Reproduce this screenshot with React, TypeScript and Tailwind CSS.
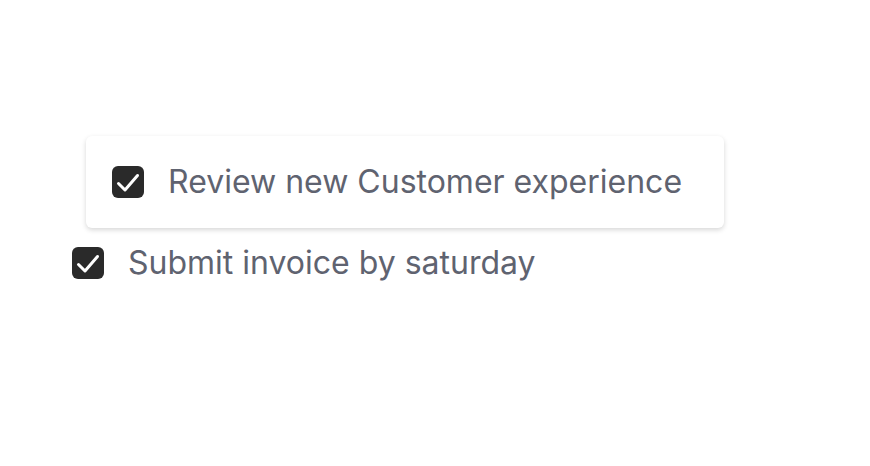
import React from 'react';

function CheckBox() {
  return (
    <span className="flex h-8 w-8 shrink-0 items-center justify-center rounded-[6px] bg-[#2a2a2a]">
      <svg viewBox="0 0 32 32" className="h-8 w-8" fill="none" stroke="white" strokeWidth={3} strokeLinecap="round" strokeLinejoin="round">
        <path d="M6.5 17.5l6.5 6.5L25.5 9.5" />
      </svg>
    </span>
  );
}

const items = ['Review new Customer experience', 'Submit invoice by saturday'];

export default function App() {
  return (
    <div className="min-h-[466px] w-full bg-white pl-[72px] pt-[136px]" style={{ fontFamily: 'Inter, "Noto Sans", sans-serif' }}>
      <div className="flex flex-col items-start gap-[15px]">
        {/* dragged item, lifted */}
        <div className="ml-[14px] flex w-[638px] items-center gap-6 rounded-md bg-white px-[26px] py-[26px] shadow-[0_2px_5px_rgba(0,0,0,0.16)]">
          <CheckBox />
          <span className="text-[32px] leading-10 text-[#5f6370]">{items[0]}</span>
        </div>
        <div className="flex items-center gap-6">
          <CheckBox />
          <span className="text-[32px] leading-10 text-[#5f6370]">{items[1]}</span>
        </div>
      </div>
    </div>
  );
}
